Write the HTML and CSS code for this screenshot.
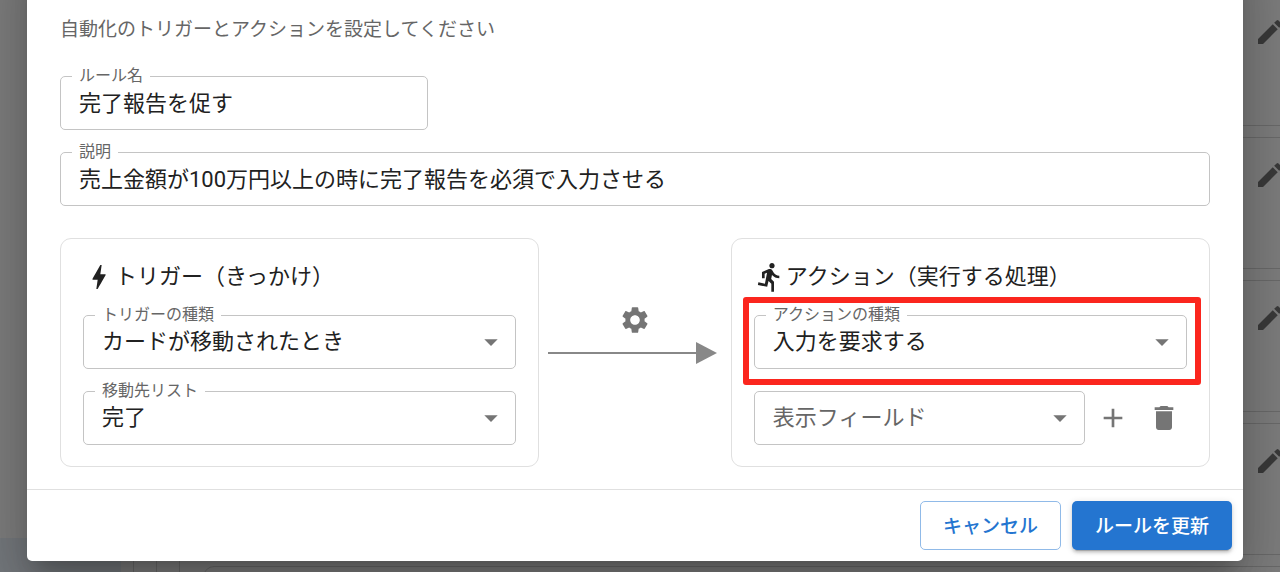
FILE: index.html
```html
<!DOCTYPE html>
<html lang="ja">
  <head>
    <meta charset="UTF-8" />
    <meta name="viewport" content="width=device-width, initial-scale=1.0" />
    <title>ルールを編集</title>
    <link rel="stylesheet" href="styles.css">
  </head>
  <body>
    <svg hidden>
      <symbol id="icon-edit" viewBox="0 0 24 24">
        <path d="M3 17.25V21h3.75L17.81 9.94l-3.75-3.75L3 17.25zM20.71 7.04c.39-.39.39-1.02 0-1.41l-2.34-2.34a.9959.9959 0 0 0-1.41 0l-1.83 1.83 3.75 3.75 1.83-1.83z" />
      </symbol>
      <symbol id="icon-dropdown" viewBox="0 0 24 24">
        <path d="M7 10l5 5 5-5z" />
      </symbol>
    </svg>

    <div class="page" aria-hidden="true">
      <div class="sidebar"><div class="sidebar-item"></div></div>
      <div class="rail"></div>
      <div class="rail"></div>
      <div class="rail"></div>
      <div class="rules">
        <div class="rule"><svg class="icon"><use href="#icon-edit" /></svg></div>
        <div class="rule"><svg class="icon"><use href="#icon-edit" /></svg></div>
        <div class="rule"><svg class="icon"><use href="#icon-edit" /></svg></div>
        <div class="rule"><svg class="icon"><use href="#icon-edit" /></svg></div>
        <div class="rule"><svg class="icon"><use href="#icon-edit" /></svg></div>
      </div>
    </div>

    <div class="backdrop">
      <form class="dialog" role="dialog" aria-modal="true">
        <div class="dialog-content">
          <p class="description">自動化のトリガーとアクションを設定してください</p>

          <div class="field field-name">
            <label for="rule-name">ルール名</label>
            <input id="rule-name" type="text" value="完了報告を促す" />
          </div>
          <div class="field">
            <label for="rule-description">説明</label>
            <input id="rule-description" type="text" value="売上金額が100万円以上の時に完了報告を必須で入力させる" />
          </div>

          <div class="flow">
            <section class="panel">
              <h2>
                <svg class="icon" viewBox="0 0 24 24">
                  <path d="M11 21h-1l1-7H7.5c-.58 0-.57-.32-.38-.66.19-.34.05-.08.07-.12C8.48 10.94 10.42 7.54 13 3h1l-1 7h3.5c.49 0 .56.33.47.51l-.07.15C12.96 17.55 11 21 11 21z" />
                </svg>
                トリガー（きっかけ）
              </h2>
              <div class="field">
                <label for="trigger-type">トリガーの種類</label>
                <select id="trigger-type">
                  <option>カードが移動されたとき</option>
                </select>
                <svg class="icon arrow"><use href="#icon-dropdown" /></svg>
              </div>
              <div class="field">
                <label for="target-list">移動先リスト</label>
                <select id="target-list">
                  <option>完了</option>
                </select>
                <svg class="icon arrow"><use href="#icon-dropdown" /></svg>
              </div>
            </section>

            <div class="connector">
              <svg class="icon" viewBox="0 0 24 24">
                <path d="M19.14 12.94c.04-.3.06-.61.06-.94 0-.32-.02-.64-.07-.94l2.03-1.58c.18-.14.23-.41.12-.61l-1.92-3.32c-.12-.22-.37-.29-.59-.22l-2.39.96c-.5-.38-1.03-.7-1.62-.94l-.36-2.54c-.04-.24-.24-.41-.48-.41h-3.84c-.24 0-.43.17-.47.41l-.36 2.54c-.59.24-1.13.57-1.62.94l-2.39-.96c-.22-.08-.47 0-.59.22L2.74 8.87c-.12.21-.08.47.12.61l2.03 1.58c-.05.3-.09.63-.09.94s.02.64.07.94l-2.03 1.58c-.18.14-.23.41-.12.61l1.92 3.32c.12.22.37.29.59.22l2.39-.96c.5.38 1.03.7 1.62.94l.36 2.54c.05.24.24.41.48.41h3.84c.24 0 .44-.17.47-.41l.36-2.54c.59-.24 1.13-.56 1.62-.94l2.39.96c.22.08.47 0 .59-.22l1.92-3.32c.12-.22.07-.47-.12-.61l-2.01-1.58zM12 15.6c-1.98 0-3.6-1.62-3.6-3.6s1.62-3.6 3.6-3.6 3.6 1.62 3.6 3.6-1.62 3.6-3.6 3.6z" />
              </svg>
              <div class="connector-line"></div>
            </div>

            <section class="panel">
              <h2>
                <svg class="icon" viewBox="0 0 24 24">
                  <path d="M13.49 5.48c1.1 0 2-.9 2-2s-.9-2-2-2-2 .9-2 2 .9 2 2 2zm-3.6 13.9l1-4.4 2.1 2v6h2v-7.5l-2.1-2 .6-3c1.3 1.5 3.3 2.5 5.5 2.5v-2c-1.9 0-3.5-1-4.3-2.4l-1-1.6c-.4-.6-1-1-1.7-1-.3 0-.5.1-.8.1l-5.2 2.2v4.7h2v-3.4l1.8-.7-1.6 8.1-4.9-1-.4 2 7 1.4z" />
                </svg>
                アクション（実行する処理）
              </h2>
              <div class="field highlighted">
                <label for="action-type">アクションの種類</label>
                <select id="action-type">
                  <option>入力を要求する</option>
                </select>
                <svg class="icon arrow"><use href="#icon-dropdown" /></svg>
              </div>
              <div class="field-row">
                <div class="field">
                  <select class="placeholder" aria-label="表示フィールド">
                    <option>表示フィールド</option>
                  </select>
                  <svg class="icon arrow"><use href="#icon-dropdown" /></svg>
                </div>
                <button class="icon-button" type="button" aria-label="追加">
                  <svg class="icon" viewBox="0 0 24 24"><path d="M19 13h-6v6h-2v-6H5v-2h6V5h2v6h6v2z" /></svg>
                </button>
                <button class="icon-button" type="button" aria-label="削除">
                  <svg class="icon" viewBox="0 0 24 24"><path d="M6 19c0 1.100.9 2 2 2h8c1.100 0 2-.9 2-2V7H6v12zM19 4h-3.500l-1-1h-5l-1 1H5v2h14V4z" /></svg>
                </button>
              </div>
            </section>
          </div>
        </div>

        <div class="dialog-actions">
          <button class="button outlined" type="button">キャンセル</button>
          <button class="button contained" type="submit">ルールを更新</button>
        </div>
      </form>
    </div>
  </body>
</html>
```
FILE: styles.css
```css
* {
  box-sizing: border-box;
}

body {
  margin: 0;
  height: 100vh;
  overflow: hidden;
  color: #212121;
  font-family: Roboto, 'Noto Sans CJK JP', sans-serif;
}

input,
select,
button {
  font-family: inherit;
}

.icon {
  display: block;
  flex: none;
  width: 32px;
  height: 32px;
  fill: currentColor;
}

/* page behind the dialog */
.page {
  position: fixed;
  inset: 0;
  display: flex;
  overflow: hidden;
  background: #fafafa;
}

.sidebar {
  display: flex;
  flex-direction: column;
  justify-content: flex-end;
  width: 121px;
}

.sidebar-item {
  height: 34px;
  background: #e8f1f8;
}

.rail {
  width: 23px;
  border-right: 1px solid #d4d4d4;
}

.rail:nth-child(2) {
  width: 13px;
}

.rules {
  display: flex;
  flex: 1;
  flex-direction: column;
  gap: 11px;
  margin: -6px -60px 0 23px;
}

.rule {
  display: flex;
  flex: none;
  justify-content: flex-end;
  height: 132px;
  padding: 21px 53px 0 0;
  border: 1px solid #d4d4d4;
  border-radius: 11px;
  color: #757575;
}

/* dialog */
.backdrop {
  position: fixed;
  inset: 0;
  display: flex;
  align-items: flex-start;
  padding: 0 37px 0 27px;
  background: rgba(0, 0, 0, 0.5);
}

.dialog {
  flex: 1;
  margin-top: -60px;
  border-radius: 5px;
  background: #fff;
  box-shadow: 0 15px 20px -9px rgba(0, 0, 0, 0.2),
    0 32px 51px 4px rgba(0, 0, 0, 0.14), 0 12px 62px 11px rgba(0, 0, 0, 0.12);
}

.dialog-content {
  display: flex;
  flex-direction: column;
  gap: 22px;
  padding: 76px 33px 22px;
}

.description {
  margin: 0 0 10px;
  color: #666;
  font-size: 19px;
  line-height: 28px;
}

.field {
  position: relative;
}

.field-name {
  width: 32%;
}

.field label {
  position: absolute;
  top: -12px;
  left: 12px;
  padding: 0 7px;
  background: #fff;
  color: #666;
  font-size: 16px;
  line-height: 24px;
}

.field input,
.field select {
  display: block;
  width: 100%;
  height: 54px;
  padding: 0 18px 4px;
  border: 1px solid #c4c4c4;
  border-radius: 5px;
  background: transparent;
  color: #212121;
  font-size: 22px;
  appearance: none;
}

.field select {
  padding-bottom: 2px;
}

.field select.placeholder {
  color: #666;
}

.field .arrow {
  position: absolute;
  top: 11px;
  right: 9px;
  color: #757575;
  pointer-events: none;
}

.flow {
  display: grid;
  grid-template-columns: 5fr 2fr 5fr;
  margin-top: 10px;
}

.panel {
  display: flex;
  flex-direction: column;
  gap: 22px;
  min-width: 0;
  padding: 22px 22px 21px;
  border: 1px solid #e0e0e0;
  border-radius: 11px;
}

.panel h2 {
  display: flex;
  align-items: center;
  margin: 0;
  font-size: 22px;
  font-weight: 400;
  line-height: 32px;
}

.highlighted::after {
  content: '';
  position: absolute;
  inset: -18px -14px -16px -11px;
  border: 6px solid #fb261e;
  border-radius: 3px;
  pointer-events: none;
}

.field-row {
  display: flex;
  align-items: center;
  gap: 5px;
}

.field-row .field {
  flex: 1;
}

.icon-button {
  display: flex;
  align-items: center;
  justify-content: center;
  width: 46px;
  height: 46px;
  padding: 0;
  border: 0;
  border-radius: 50%;
  background: none;
  color: #757575;
}

.connector {
  display: flex;
  flex-direction: column;
  align-items: center;
  gap: 6px;
  padding-top: 66px;
  color: #757575;
}

.connector-line {
  display: flex;
  align-items: center;
  width: 100%;
  padding: 0 14px 0 9px;
}

.connector-line::before {
  content: '';
  flex: 1;
  height: 2px;
  background: #888;
}

.connector-line::after {
  content: '';
  border: solid transparent;
  border-width: 11px 0 11px 21px;
  border-left-color: #888;
}

.dialog-actions {
  display: flex;
  justify-content: flex-end;
  gap: 11px;
  padding: 11px;
  border-top: 1px solid #e0e0e0;
}

.button {
  height: 49px;
  padding: 0 22px 2px;
  border: 1px solid transparent;
  border-radius: 5px;
  font-size: 19px;
  font-weight: 500;
}

.outlined {
  border-color: #90bae8;
  background: #fff;
  color: #2475d0;
}

.contained {
  background: #2475d0;
  color: #fff;
  box-shadow: 0 4px 1px -3px rgba(0, 0, 0, 0.2), 0 3px 3px rgba(0, 0, 0, 0.14),
    0 1px 7px rgba(0, 0, 0, 0.12);
}
```
